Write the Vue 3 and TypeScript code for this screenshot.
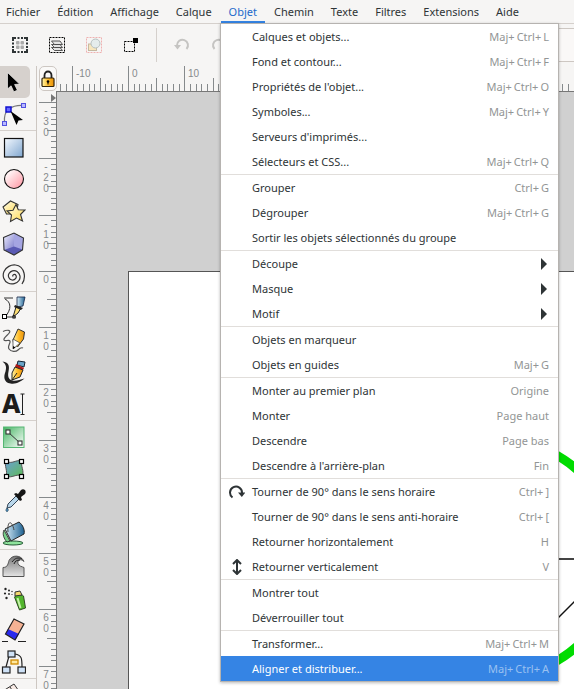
<script setup lang="ts">
interface Entry { label: string; keys?: string; sub?: boolean; icon?: 'rotate' | 'flip'; active?: boolean }

const menus = ['Fichier', 'Édition', 'Affichage', 'Calque', 'Objet', 'Chemin', 'Texte', 'Filtres', 'Extensions', 'Aide']

const groups: Entry[][] = [
  [
    { label: 'Calques et objets...', keys: 'Maj+Ctrl+L' },
    { label: 'Fond et contour...', keys: 'Maj+Ctrl+F' },
    { label: "Propriétés de l'objet...", keys: 'Maj+Ctrl+O' },
    { label: 'Symboles...', keys: 'Maj+Ctrl+Y' },
    { label: "Serveurs d'imprimés..." },
    { label: 'Sélecteurs et CSS...', keys: 'Maj+Ctrl+Q' },
  ],
  [
    { label: 'Grouper', keys: 'Ctrl+G' },
    { label: 'Dégrouper', keys: 'Maj+Ctrl+G' },
    { label: 'Sortir les objets sélectionnés du groupe' },
  ],
  [
    { label: 'Découpe', sub: true },
    { label: 'Masque', sub: true },
    { label: 'Motif', sub: true },
  ],
  [{ label: 'Objets en marqueur' }, { label: 'Objets en guides', keys: 'Maj+G' }],
  [
    { label: 'Monter au premier plan', keys: 'Origine' },
    { label: 'Monter', keys: 'Page haut' },
    { label: 'Descendre', keys: 'Page bas' },
    { label: "Descendre à l'arrière-plan", keys: 'Fin' },
  ],
  [
    { label: 'Tourner de 90° dans le sens horaire', keys: 'Ctrl+]', icon: 'rotate' },
    { label: 'Tourner de 90° dans le sens anti-horaire', keys: 'Ctrl+[' },
    { label: 'Retourner horizontalement', keys: 'H' },
    { label: 'Retourner verticalement', keys: 'V', icon: 'flip' },
  ],
  [{ label: 'Montrer tout' }, { label: 'Déverrouiller tout' }],
  [
    { label: 'Transformer...', keys: 'Maj+Ctrl+M' },
    { label: 'Aligner et distribuer...', keys: 'Maj+Ctrl+A', active: true },
  ],
]

const tools: string[][] = [
  ['select', 'node'],
  ['rect', 'circle', 'star', 'cube', 'spiral'],
  ['pen', 'pencil', 'calligraphy', 'text'],
  ['gradient', 'mesh', 'dropper', 'bucket'],
  ['tweak', 'spray', 'eraser', 'connector'],
  ['measure'],
]

/* "Maj+Ctrl+L" becomes "Maj+", "Ctrl+", "L". */
const keyParts = (keys: string) => keys.split(/(?<=\+)/)

/* Ten document units span STEP pixels on both rulers. */
const STEP = 56.4
const H_ORIGIN = 71
const V_ORIGIN = 180
const place = (origin: number, value: number) => Math.round(origin + (value * STEP) / 10)

function ticks(origin: number, from: number, to: number) {
  const list: { at: number; kind: number }[] = []
  for (let i = from; i <= to; i++) {
    const n = Math.abs(i)
    list.push({ at: place(origin, i), kind: n % 10 === 0 ? 2 : n % 5 === 0 ? 1 : 0 })
  }
  return list.filter((t) => t.at > 2)
}
const hTicks = ticks(H_ORIGIN, -12, 300)
const vTicks = ticks(V_ORIGIN, -30, 200)
const hLabels = [-10, 0, 10].map((v) => ({ v, at: place(H_ORIGIN, v) + 4 }))
const vDigits = [-30, -20, -10, 0, 10, 20, 30, 40, 50, 60, 70].flatMap((v) =>
  String(v).split('').map((c, i) => ({ c, y: place(V_ORIGIN, v) + 12 + i * 11 })),
)
const hTop = [18, 12, 0]
const vLeft = [14, 10, 2]
</script>

<template>
  <div class="app">
    <svg class="defs" width="0" height="0" aria-hidden="true">
      <defs>
        <linearGradient id="gBlue" x1="0" y1="0" x2="1" y2="1"><stop offset="0" stop-color="#f4f9ff" /><stop offset="1" stop-color="#7fa6cf" /></linearGradient>
        <linearGradient id="gPink" x1="0" y1="0" x2="1" y2="1"><stop offset="0.1" stop-color="#fff" /><stop offset="1" stop-color="#ff93a0" /></linearGradient>
        <linearGradient id="gYellow" x1="0" y1="0" x2="1" y2="1"><stop offset="0" stop-color="#fffef0" /><stop offset="1" stop-color="#ffd84a" /></linearGradient>
        <linearGradient id="gGreen" x1="0" y1="0" x2="1" y2="1"><stop offset="0" stop-color="#45b563" /><stop offset="1" stop-color="#fff" /></linearGradient>
        <linearGradient id="gMesh" x1="0" y1="0" x2="1" y2="1"><stop offset="0" stop-color="#6c9fd6" /><stop offset="1" stop-color="#5dbb55" /></linearGradient>
        <linearGradient id="gCube" x1="0" y1="0" x2="1" y2="1"><stop offset="0" stop-color="#f0f0ff" /><stop offset="1" stop-color="#8080cc" /></linearGradient>
        <linearGradient id="gSteel" x1="0" y1="0" x2="1" y2="0"><stop offset="0" stop-color="#d7edf8" /><stop offset="1" stop-color="#1d6090" /></linearGradient>
        <linearGradient id="gGrey" x1="0" y1="0" x2="0" y2="1"><stop offset="0" stop-color="#777" /><stop offset="1" stop-color="#e4e4e4" /></linearGradient>
        <linearGradient id="gGold" x1="0" y1="0" x2="1" y2="0"><stop offset="0" stop-color="#fff6a8" /><stop offset="0.5" stop-color="#ffbc2b" /><stop offset="1" stop-color="#e8910a" /></linearGradient>
      </defs>
    </svg>

    <nav class="menubar" aria-label="Menu principal">
      <button v-for="m in menus" :key="m" class="menu-title" :class="{ open: m === 'Objet' }" type="button">{{ m }}</button>
    </nav>

    <div class="toolbar">
      <button class="cmd" type="button" aria-label="Tout sélectionner">
        <svg width="18" height="18" viewBox="0 0 18 18"><path d="M2 5V2h3M6.500 2h2M10 2h2M13 2h3v3M16 6.500v2M16 10v2M16 13v3h-3M12 16h-2M8.500 16h-2M5 16H2v-3M2 12v-2M2 8.500v-2" fill="none" stroke="#2e3436" stroke-width="2" /><g fill="#aaa"><rect x="5" y="5" width="3.500" height="3.500" rx="1" /><rect x="9.500" y="5" width="3.500" height="3.500" rx="1" /><rect x="5" y="9.500" width="3.500" height="3.500" rx="1" /><rect x="9.500" y="9.500" width="3.500" height="3.500" rx="1" /></g></svg>
      </button>
      <button class="cmd" type="button" aria-label="Sélectionner dans tous les calques">
        <svg width="18" height="18" viewBox="0 0 18 18"><path d="M1.500 1.500h15v15h-15z" fill="none" stroke="#000" stroke-dasharray="2 1" /><g fill="#e4e4e4" stroke="#444" stroke-width=".9"><path d="M3.500 11.500l3 3h8l-2.500-3z" /><path d="M3.500 8.500l3 3h8l-2.500-3z" /><path d="M3.500 5l3 3.500h8L12 5z" /></g></svg>
      </button>
      <button class="cmd" type="button" aria-label="Désélectionner" disabled>
        <svg width="18" height="18" viewBox="0 0 18 18"><path d="M1.500 1.500h15v15h-15z" fill="none" stroke="#efb0b0" stroke-dasharray="2 1" /><rect x="3.500" y="8" width="8" height="6.500" fill="#f7e6bd" stroke="#c5b9a1" /><circle cx="10.500" cy="7.500" r="4.500" fill="#e5ecec" stroke="#b7c0c0" /></svg>
      </button>
      <button class="cmd" type="button" aria-label="Boîte de sélection">
        <svg width="18" height="18" viewBox="0 0 18 18"><path d="M2.500 5.500h10v10h-10z" fill="none" stroke="#000" stroke-dasharray="2 1" /><path d="M11 2h5v5h-5z" fill="#000" /></svg>
      </button>
      <span class="rule"></span>
      <button class="cmd" type="button" aria-label="Annuler" disabled>
        <svg width="18" height="18" viewBox="0 0 18 18"><path d="M4 9.500a5.500 5.500 0 1 1 9.500 3.500" fill="none" stroke="#c5c4c2" stroke-width="2" /><path d="M1 9h7l-3.500 4.500z" fill="#c5c4c2" /></svg>
      </button>
      <button class="cmd" type="button" aria-label="Rétablir" disabled>
        <svg width="18" height="18" viewBox="0 0 18 18"><path d="M14 9.500a5.500 5.500 0 1 0-9.500 3.500" fill="none" stroke="#c5c4c2" stroke-width="2" /><path d="M17 9h-7l3.500 4.500z" fill="#c5c4c2" /></svg>
      </button>
      <input class="field" type="text" aria-label="Position" />
    </div>

    <div class="body">
      <aside class="toolbox">
        <div v-for="(g, gi) in tools" :key="gi" class="tool-group">
          <button v-for="t in g" :key="t" class="tool" :class="{ on: t === 'select' }" type="button" :aria-label="t">
            <svg width="26" height="26" viewBox="0 0 26 26">
              <template v-if="t === 'select'"><path d="M7.500 3.500v16.500l3.600-3.200 2.700 6 3.600-1.600-2.800-5.700 5-.4z" fill="#000" stroke="#f4f2f0" stroke-width=".7" /></template>
              <template v-else-if="t === 'node'"><path d="M4.500 22Q3.500 12 9 8t14-3.500" fill="none" stroke="#777" stroke-width="1.200" /><g fill="#b9b9ff" stroke="#5252e0"><rect x="21.500" y="2.500" width="4" height="4" /><rect x="2.500" y="20.500" width="4" height="4" /></g><rect x="6" y="6" width="5" height="5" fill="#6868ff" stroke="#1010d0" stroke-width="1.500" /><path d="M10.500 10l12.500 9-4.500.5-2 4.500z" fill="#000" /></template>
              <template v-else-if="t === 'rect'"><rect x="4.500" y="4.500" width="18.500" height="18.500" fill="url(#gBlue)" stroke="#111" stroke-width="1.200" /></template>
              <template v-else-if="t === 'circle'"><circle cx="14" cy="13" r="9.500" fill="url(#gPink)" stroke="#111" stroke-width="1.100" /></template>
              <template v-else-if="t === 'star'"><path d="M3 9l7.500-6L18 6.500 16 16H6.500z" fill="url(#gYellow)" stroke="#333" stroke-width="1.100" /><path d="M16 6.500l2.300 5.200 6.700.3-4.500 4.500 2 6.500-6-3-6 3.500 1-6.500-4.500-4 6-.8z" fill="url(#gYellow)" stroke="#333" stroke-width="1.100" /></template>
              <template v-else-if="t === 'cube'"><path d="M3.500 7.500L14 3l9.500 5-1 12L14 25 4 20z" fill="#5a5ab4" /><path d="M3.500 7.500L14 3v13.500L4 20z" fill="url(#gCube)" /><path d="M14 3l9.500 5-1 11.500-8.500-3z" fill="#a5a5e2" /><path d="M3.500 7.500L14 3l9.500 5-1 12L14 25 4 20z" fill="none" stroke="#333" stroke-width="1.100" /></template>
              <template v-else-if="t === 'spiral'"><path d="M13 14.500c-1-2 2-3 3-1s-1 5-4 4.500-4.500-4-3-6.500 5-4 8-2 4 6 2 9-7 4.500-11 2.500-6-7-4-11.500S11 2.500 15.500 3 23 7 24 11s0 8-2 11" fill="none" stroke="#333" stroke-width="1.200" /></template>
              <template v-else-if="t === 'pen'"><path d="M4 3h9M5 4c6 3 7 10 0 18h11" fill="none" stroke="#333" /><path d="M17 2l8 0-2 9-6 1z" fill="url(#gSteel)" stroke="#124" stroke-width=".8" /><path d="M16 12l5 1-3 5-5 4z" fill="#ffe073" stroke="#222" /><path d="M15 10l8 3-2 2-7-3z" fill="#222" /><g fill="#fff" stroke="#000"><rect x="2.500" y="19.500" width="4" height="4" /><rect x="13" y="21" width="2" height="2" /></g></template>
              <template v-else-if="t === 'pencil'"><path d="M3 4.500c4-2 8-1.500 6.500 1S3 11 4 13s5-1 6 1-3 5-1 8 7 3 9 1 3-3 5-2" fill="none" stroke="#555" stroke-width="1.200" /><path d="M18 2l6.500 3-1 7-6 8-4-4-.5-3z" fill="url(#gGold)" stroke="#333" /><path d="M13 12l7 4-7 6z" fill="#fff" stroke="#333" stroke-width=".7" /><path d="M13 22v-3l2.500 1.500z" /></template>
              <template v-else-if="t === 'calligraphy'"><path d="M2.500 2.500c7 1 7 5 6 10s0 8 4 9 7-1 12-2c-4 3-8 6-14 5-7-1-7-7-5-12 1-4 1-7-3-10z" fill="#222" /><path d="M18 2l7 1-1 5-7-2z" fill="#6aa4c8" stroke="#123" /><path d="M16 5l8 4-1 2-8-3z" fill="#b31919" /><path d="M15 8l8 3-3 7-8 3 0-7z" fill="url(#gGold)" stroke="#222" /><path d="M12 21l5-7" stroke="#222" /></template>
              <template v-else-if="t === 'text'"><text x="2" y="22" class="glyph-a">A</text><path d="M20.500 3h4M20.500 23.500h4M22.500 3v20.500" fill="none" stroke="#222" /></template>
              <template v-else-if="t === 'gradient'"><rect x="3.500" y="3" width="20.500" height="20.500" fill="url(#gGreen)" stroke="#55b673" /><path d="M8 8l12 11" stroke="#333" /><g fill="#fff" stroke="#333" stroke-width="1.100"><rect x="6" y="6" width="4" height="4" /><rect x="18" y="17" width="4" height="4" /></g></template>
              <template v-else-if="t === 'mesh'"><path d="M6 5c6 4 10-2 16 0-2 5 3 10 0 15-6-3-10 3-16 0 2-5-2-10 0-15z" fill="url(#gMesh)" stroke="#555" /><g fill="#fff" stroke="#000" stroke-width="1.200"><rect x="4.500" y="3.500" width="4" height="4" /><rect x="19.500" y="3.500" width="4" height="4" /><rect x="4.500" y="18.500" width="4" height="4" /><rect x="19.500" y="18.500" width="4" height="4" /></g></template>
              <template v-else-if="t === 'dropper'"><path d="M16 8l3 3-8 8-4 1 1-4z" fill="#b9d7eb" stroke="#345" /><path d="M14 6l2-1 2 1 3-4c3-2 6 1 4 4l-4 3 1 3-2 1z" fill="#151515" /><path d="M7 20c-3 4 2 5 1 1z" fill="#579bd3" stroke="#245" stroke-width=".8" /></template>
              <template v-else-if="t === 'bucket'"><ellipse cx="13" cy="23" rx="10" ry="2" fill="#8fe39c" stroke="#275b37" /><path d="M4 10c-2 4 0 9 3 12l3-1z" fill="#78d08a" stroke="#222" stroke-width=".8" /><path d="M5 9l14-7c4 3 6 8 5 12L11 21z" fill="url(#gSteel)" stroke="#222" /><path d="M8 12c-1-12 4-12 6-2" fill="none" stroke="#444" /></template>
              <template v-else-if="t === 'tweak'"><path d="M3 23.500v-9c5 0 5-4 6-7 3-6 12-6 15 1-3-3-7-2-6 2 1 3 4 3 6 4v9z" fill="url(#gGrey)" stroke="#555" /><path d="M12 9c3-4 6-5 10-3M14 11c1-3 3-4 6-4" fill="none" stroke="#222" /></template>
              <template v-else-if="t === 'spray'"><path d="M14.500 12c1-2 7-3 9-1l2 12-6 2z" fill="#52b62d" stroke="#2f4923" /><path d="M17.500 13l3 10" stroke="#c5f1a8" stroke-width="2" /><path d="M15 7l5-1 2 4-7 1z" fill="#f3d76e" stroke="#333" /><g fill="#222"><circle cx="5.500" cy="4" r="1.200" /><circle cx="9" cy="5.500" r="1" /><circle cx="5" cy="8.500" r="1.100" /><circle cx="9" cy="9" r=".9" /><circle cx="12" cy="6.500" r=".7" /><circle cx="6.500" cy="13" r="1.200" /><circle cx="12" cy="9.500" r=".6" /></g></template>
              <template v-else-if="t === 'eraser'"><path d="M14 2l10 5-6 11-10-6z" fill="#f5b293" /><path d="M8 12l11 5-3.500 6-10-6z" fill="#2929ee" /><path d="M14 2l10 5-9 16-9.500-6z" fill="none" stroke="#222" stroke-width="1.200" /><path d="M2 24.500h6M18 24.500h8" stroke="#222" /></template>
              <template v-else-if="t === 'connector'"><path d="M9 7L6 18M15 5c7 1 7 5 7 13" fill="none" stroke="#222" stroke-width="1.200" /><g fill="#cfe2f7" stroke="#222" stroke-width="1.200"><rect x="8" y="2" width="7" height="6" /><rect x="2.500" y="18" width="7.500" height="6" /><rect x="18" y="18" width="7.500" height="6" /></g><rect x="11" y="11" width="7" height="4" fill="#ffe9a0" stroke="#d08a00" stroke-width="1.300" /></template>
              <template v-else><path d="M3 9l11-7 11 16-8 7z" fill="#f6e9e4" stroke="#333" /><path d="M7 7l2 3M10 5l2 3" stroke="#333" /></template>
            </svg>
          </button>
        </div>
      </aside>

      <div class="ruler-left">
        <button class="lock" type="button" aria-label="Verrouiller les guides">
          <svg width="14" height="18" viewBox="0 0 14 18"><path d="M3.500 8V5.500a3.500 4 0 0 1 7 0V8" fill="none" stroke="#222" stroke-width="1.800" /><rect x="1" y="8" width="12" height="8.500" rx="1" fill="url(#gGold)" stroke="#33240a" stroke-width="1.200" /><circle cx="7" cy="11.500" r="1.300" /><path d="M6.500 11.500h1v3h-1z" /></svg>
        </button>
        <svg class="vruler" width="20" height="100%" aria-hidden="true">
          <path v-for="(t, i) in vTicks" :key="i" :d="`M${vLeft[t.kind]} ${t.at + 0.5}H19`" class="tick" />
          <text v-for="(d, i) in vDigits" :key="'d' + i" x="9" :y="d.y" class="num" text-anchor="middle">{{ d.c }}</text>
          <path d="M14 3l5 4-5 4z" fill="#777" />
        </svg>
      </div>

      <main class="work">
        <svg class="hruler" width="100%" height="26" aria-hidden="true">
          <path v-for="(t, i) in hTicks" :key="i" :d="`M${t.at + 0.5} ${hTop[t.kind]}V25`" class="tick" />
          <text v-for="l in hLabels" :key="l.v" :x="l.at" y="11" class="num">{{ l.v }}</text>
        </svg>
        <div class="canvas">
          <svg width="100%" height="100%" aria-hidden="true">
            <rect x="71.500" y="179.500" width="4000" height="4000" fill="#fff" stroke="#555" />
            <circle cx="441" cy="466" r="118.500" fill="none" stroke="#00dc00" stroke-width="9" />
            <path d="M441 467h260" stroke="#444" stroke-width="2" />
            <path d="M499 528l60-60" stroke="#111" stroke-width="1.500" />
          </svg>
        </div>
      </main>
    </div>

    <div class="dropdown" role="menu" aria-label="Objet">
      <div v-for="(g, gi) in groups" :key="gi" class="menu-group">
        <button v-for="e in g" :key="e.label" class="item" :class="{ active: e.active }" type="button" role="menuitem">
          <span class="glyph">
            <svg v-if="e.icon === 'rotate'" width="16" height="16" viewBox="0 0 16 16"><path d="M3.500 13.500A6 6 0 1 1 13 9" fill="none" stroke="#2e3436" stroke-width="2" /><path d="M9 8.500h7.500L12.800 13z" fill="#2e3436" /></svg>
            <svg v-else-if="e.icon === 'flip'" width="16" height="16" viewBox="0 0 16 16"><path d="M8 2v12M4 5l4-4 4 4M4 11l4 4 4-4" fill="none" stroke="#2e3436" stroke-width="2" /></svg>
          </span>
          <span class="label">{{ e.label }}</span>
          <span v-if="e.keys" class="keys"><span v-for="k in keyParts(e.keys)" :key="k">{{ k }}</span></span>
          <svg v-if="e.sub" class="arrow" width="6" height="12" viewBox="0 0 6 12"><path d="M0 0l6 6-6 6z" fill="#2e3436" /></svg>
        </button>
      </div>
    </div>
  </div>
</template>

<style>
body { margin: 0; overflow: hidden; }
</style>

<style scoped>
.app { position: relative; display: flex; flex-direction: column; height: 100vh; overflow: hidden; background: #f6f5f4; color: #2e3436; font-family: "Noto Sans", sans-serif; font-size: 11px; line-height: 16px; }
.defs { position: absolute; }
button { margin: 0; padding: 0; border: 0; background: none; color: inherit; font: inherit; }
svg { display: block; flex: none; }
.menubar { display: flex; flex: none; gap: 1px; height: 23px; margin-left: -2px; border-bottom: 1px solid #d5d0cc; }
.menu-title { height: 24px; padding: 2px 8px 0; border-bottom: 3px solid transparent; white-space: nowrap; }
.menu-title.open { color: #1b6acb; border-bottom-color: #3584e4; }
.toolbar { display: flex; flex: none; align-items: center; gap: 19px; height: 42px; padding-left: 11px; }
.cmd { flex: none; width: 18px; height: 18px; }
.rule { flex: none; width: 1px; height: 34px; margin: 0 -3px; background: #d5d0cc; }
.field { flex: 1; min-width: 0; height: 34px; box-sizing: border-box; margin: 0; border: 1px solid #cdc7c2; border-right: 0; background: #faf8f7; font: inherit; }
.body { display: flex; flex: 1; min-height: 0; }
.toolbox { flex: none; width: 36px; border-right: 1px solid #cdc7c2; overflow: hidden; }
.tool-group + .tool-group { border-top: 1px solid #d5d0cc; }
.tool { display: flex; align-items: center; width: 30px; height: 32px; }
.tool.on { border-radius: 0 5px 5px 0; background: #d6d1cd; }
.glyph-a { font-family: "Noto Sans", sans-serif; font-size: 26px; font-weight: 800; fill: #1c1c1c; }
.ruler-left { display: flex; flex: none; flex-direction: column; width: 20px; }
.lock { display: flex; flex: none; align-items: center; justify-content: center; box-sizing: border-box; width: 18px; height: 25px; margin-left: 2px; border: 1px solid #cdc7c2; border-radius: 5px; background: #faf9f8; }
.vruler { flex: 1; min-height: 0; }
.work { display: flex; flex: 1; flex-direction: column; min-width: 0; }
.tick { stroke: #868a8c; fill: none; }
.num { font-family: "Liberation Sans", sans-serif; font-size: 10px; fill: #868a8c; }
.canvas { flex: 1; min-height: 0; margin: -1px 0 0 -1px; border: 1px solid #777; border-width: 1px 0 0 1px; background: #d0d0d0; }
.dropdown { position: absolute; top: 23px; left: 220px; width: 337px; border: 1px solid #b6b3b0; background: #fff; box-shadow: 0 1px 3px #0004; }
.menu-group + .menu-group { border-top: 1px solid #e1dedb; }
.item { display: flex; align-items: center; width: 100%; height: 25px; padding: 0 9px 0 8px; text-align: left; }
.item.active { background: #3584e4; color: #fff; }
.glyph { flex: none; width: 16px; margin-right: 7px; }
.label { flex: 1; white-space: nowrap; }
.keys { display: flex; gap: 2px; color: #929595; white-space: nowrap; }
.active .keys { color: #9ac1f1; }
.arrow { margin-right: 2px; }
</style>
